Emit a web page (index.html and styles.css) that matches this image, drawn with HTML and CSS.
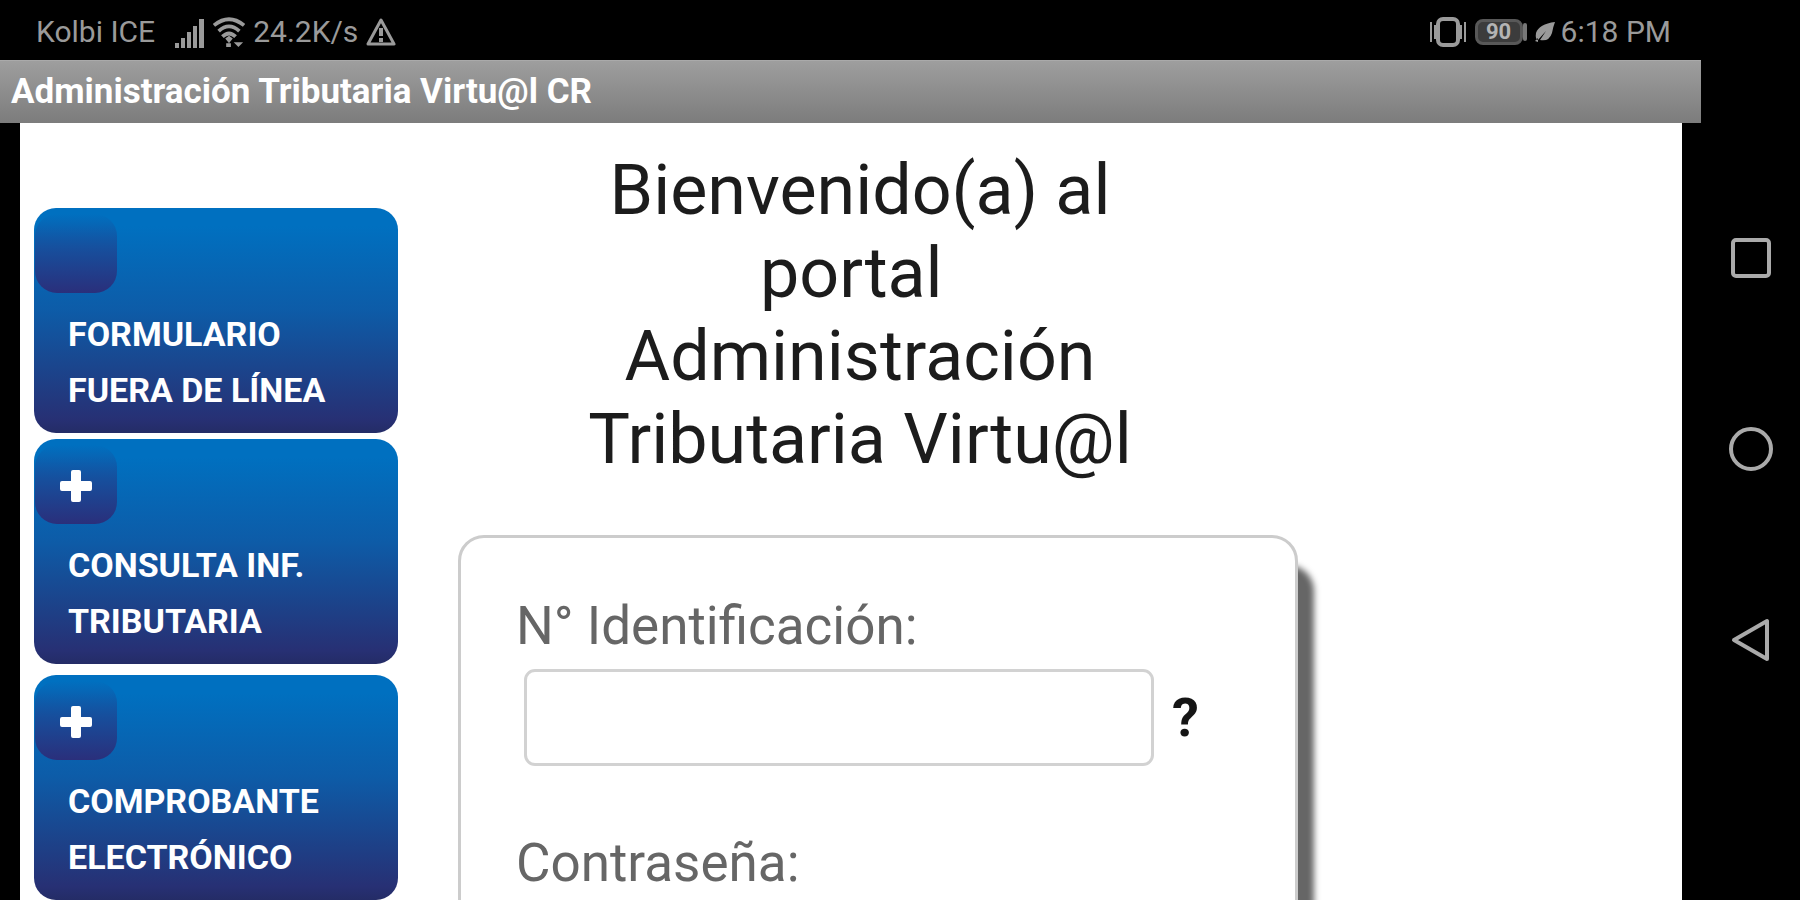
FILE: index.html
```html
<!DOCTYPE html>
<html lang="es">
<head>
<meta charset="utf-8">
<title>Administración Tributaria Virtu@l CR</title>
<link rel="stylesheet" href="styles.css">
</head>
<body>
<div class="device">
  <div class="screen">
    <div class="status">
      <span class="carrier">Kolbi ICE</span>
      <svg class="signal" width="32" height="34" viewBox="0 0 32 34"><path d="M2 28h4v5H2zM8 23h4v10H8zM14 17h4v16h-4zM20 11h4v22h-4zM26 4h5v29h-5z"/></svg>
      <svg class="wifi" width="32" height="34" viewBox="0 0 34 34"><g fill="none" stroke="#9a9a9a" stroke-width="4"><path d="M1 10Q17-3 33 10M6 16Q17 6 28 16M10 22Q17 15 24 22"/></g><path d="M13 24l4-3 4 3-4 5zM14 29h5v4h-5zM22 28h10l-5 5z"/></svg>
      <span class="speed">24.2K/s</span>
      <svg class="warning" width="30" height="30" viewBox="0 0 30 30"><path d="M15 3 28 27H2z" fill="none" stroke="#9a9a9a" stroke-width="3" stroke-linejoin="round"/><path d="M13 11h4v8h-4zM13 21h4v4h-4z"/></svg>
      <span class="spacer"></span>
      <svg class="vibrate" width="36" height="32" viewBox="0 0 36 32"><rect x="8" y="3" width="20" height="26" rx="5" fill="none" stroke="#9a9a9a" stroke-width="4"/><path d="M0 6h2v20H0zM4 9h2v14H4zM30 9h2v14h-2zM34 6h2v20h-2z"/></svg>
      <span class="battery">90</span>
      <svg class="leaf" width="20" height="22" viewBox="0 0 20 22"><path d="M20 1Q4 3 1 12q-1 6 2 7l8-9-6 9q9 2 12-7 1-6 3-11zM0 20l3-3v4z"/></svg>
      <span class="time">6:18 PM</span>
    </div>
    <header class="title-bar">Administración Tributaria Virtu@l CR</header>
    <main class="content">
      <nav class="menu">
        <button class="menu-item" type="button"><span class="badge"></span>FORMULARIO<br>FUERA DE LÍNEA</button>
        <button class="menu-item" type="button"><span class="badge"><svg width="34" height="34" viewBox="0 0 34 34"><path d="M14 1h6q2 0 2 2v9h9q2 0 2 2v6q0 2-2 2h-9v9q0 2-2 2h-6q-2 0-2-2v-9H3q-2 0-2-2v-6q0-2 2-2h9V3q0-2 2-2z"/></svg></span>CONSULTA INF.<br>TRIBUTARIA</button>
        <button class="menu-item spaced" type="button"><span class="badge"><svg width="34" height="34" viewBox="0 0 34 34"><path d="M14 1h6q2 0 2 2v9h9q2 0 2 2v6q0 2-2 2h-9v9q0 2-2 2h-6q-2 0-2-2v-9H3q-2 0-2-2v-6q0-2 2-2h9V3q0-2 2-2z"/></svg></span>COMPROBANTE<br>ELECTRÓNICO</button>
      </nav>
      <section class="portal">
        <h1 class="welcome">Bienvenido(a) al<br>portal&nbsp;<br>Administración<br>Tributaria Virtu@l</h1>
        <form class="login">
          <label class="label" for="id-number">N° Identificación:</label>
          <div class="field">
            <input class="input" id="id-number" type="text">
            <button class="help" type="button" aria-label="Ayuda">?</button>
          </div>
          <label class="label" for="password">Contraseña:</label>
          <div class="field">
            <input class="input" id="password" type="password">
          </div>
        </form>
      </section>
    </main>
  </div>
  <nav class="system-nav">
    <button class="nav-key" type="button" aria-label="Recientes"><svg width="44" height="44" viewBox="0 0 44 44"><rect x="4" y="4" width="36" height="36" rx="3"/></svg></button>
    <button class="nav-key" type="button" aria-label="Inicio"><svg width="44" height="44" viewBox="0 0 44 44"><circle cx="22" cy="22" r="20"/></svg></button>
    <button class="nav-key" type="button" aria-label="Atrás"><svg width="44" height="44" viewBox="0 0 44 44"><path d="M38 3v38L5 22z"/></svg></button>
  </nav>
</div>
</body>
</html>
```
FILE: styles.css
```css
* { box-sizing: border-box; }
body { margin: 0; background: #000; font-family: Roboto, "Liberation Sans", sans-serif; }
button { border: 0; background: none; padding: 0; font-family: inherit; }
svg { display: block; flex: none; }
.device { display: flex; height: 100vh; overflow: hidden; }
.screen { flex: 1; display: flex; flex-direction: column; min-width: 0; }
.status { display: flex; align-items: center; flex: none; height: 60px; padding: 3px 30px 0 36px; color: #9a9a9a; fill: #9a9a9a; font-size: 30px; line-height: 36px; white-space: nowrap; }
.signal { margin-left: 18px; }
.wifi { margin: 0 8px; }
.warning { margin-left: 8px; }
.spacer { flex: 1; }
.battery { position: relative; width: 48px; height: 26px; margin: 0 12px 0 9px; border: 3px solid #585858; border-radius: 8px; background: #3c3c3c; color: #b4b4b4; font-size: 22px; font-weight: 700; line-height: 20px; text-align: center; }
.battery::after { content: ""; position: absolute; right: -7px; top: 1px; width: 4px; height: 18px; border-radius: 2px; background: #777; }
.time { margin-left: 6px; }
.title-bar { flex: none; height: 63px; padding: 0 11px; background: linear-gradient(#9e9e9e, #7c7c7c); border-top: 1px solid #aaa; color: #fff; font-size: 35px; font-weight: 700; line-height: 62px; white-space: nowrap; }
.content { flex: 1; display: flex; min-height: 0; margin: 0 19px 0 20px; padding-left: 14px; background: #fff; }
.menu { flex: none; width: 364px; padding-top: 85px; }
.menu-item { position: relative; display: block; width: 100%; height: 225px; margin-bottom: 6px; padding: 82px 34px 0; border-radius: 22px; background: linear-gradient(#0070c0, #0070c0 8%, #0d5ca8 45%, #273074 94%, #242c66); color: #fff; font-size: 34px; font-weight: 700; line-height: 56px; text-align: left; white-space: nowrap; }
.spaced { margin-top: 11px; }
.badge { position: absolute; left: 1px; top: 6px; width: 82px; height: 79px; padding: 24px; border-radius: 22px; background: linear-gradient(#0d6ab900, #174e9c 45%, #2a2f7b); fill: #fff; }
.portal { flex: 1; max-width: 900px; padding-left: 60px; }
.welcome { margin: 0; padding: 26px 36px 0 0; color: #1c1c1c; font-size: 70px; font-weight: 400; line-height: 83px; text-align: center; white-space: nowrap; }
.login { margin-top: 54px; height: 700px; padding: 57px 55px 0; border: 3px solid #ccc; border-radius: 26px; background: #fff; box-shadow: 16px 30px 6px #666; }
.label { display: block; color: #666; font-size: 53px; line-height: 62px; }
.field { display: flex; align-items: center; gap: 18px; margin: 12px 0 66px 8px; }
.input { flex: none; width: 88%; height: 97px; padding: 0 16px; border: 3px solid #d2d2d2; border-radius: 11px; background: #fff; color: #333; font: inherit; font-size: 48px; }
.help { color: #151515; font-size: 54px; font-weight: 700; }
.system-nav { flex: none; display: flex; flex-direction: column; align-items: center; gap: 147px; width: 99px; padding-top: 236px; }
.nav-key { display: block; height: 44px; }
.nav-key svg { fill: none; stroke: #aaa; stroke-width: 4; stroke-linejoin: round; }
```
